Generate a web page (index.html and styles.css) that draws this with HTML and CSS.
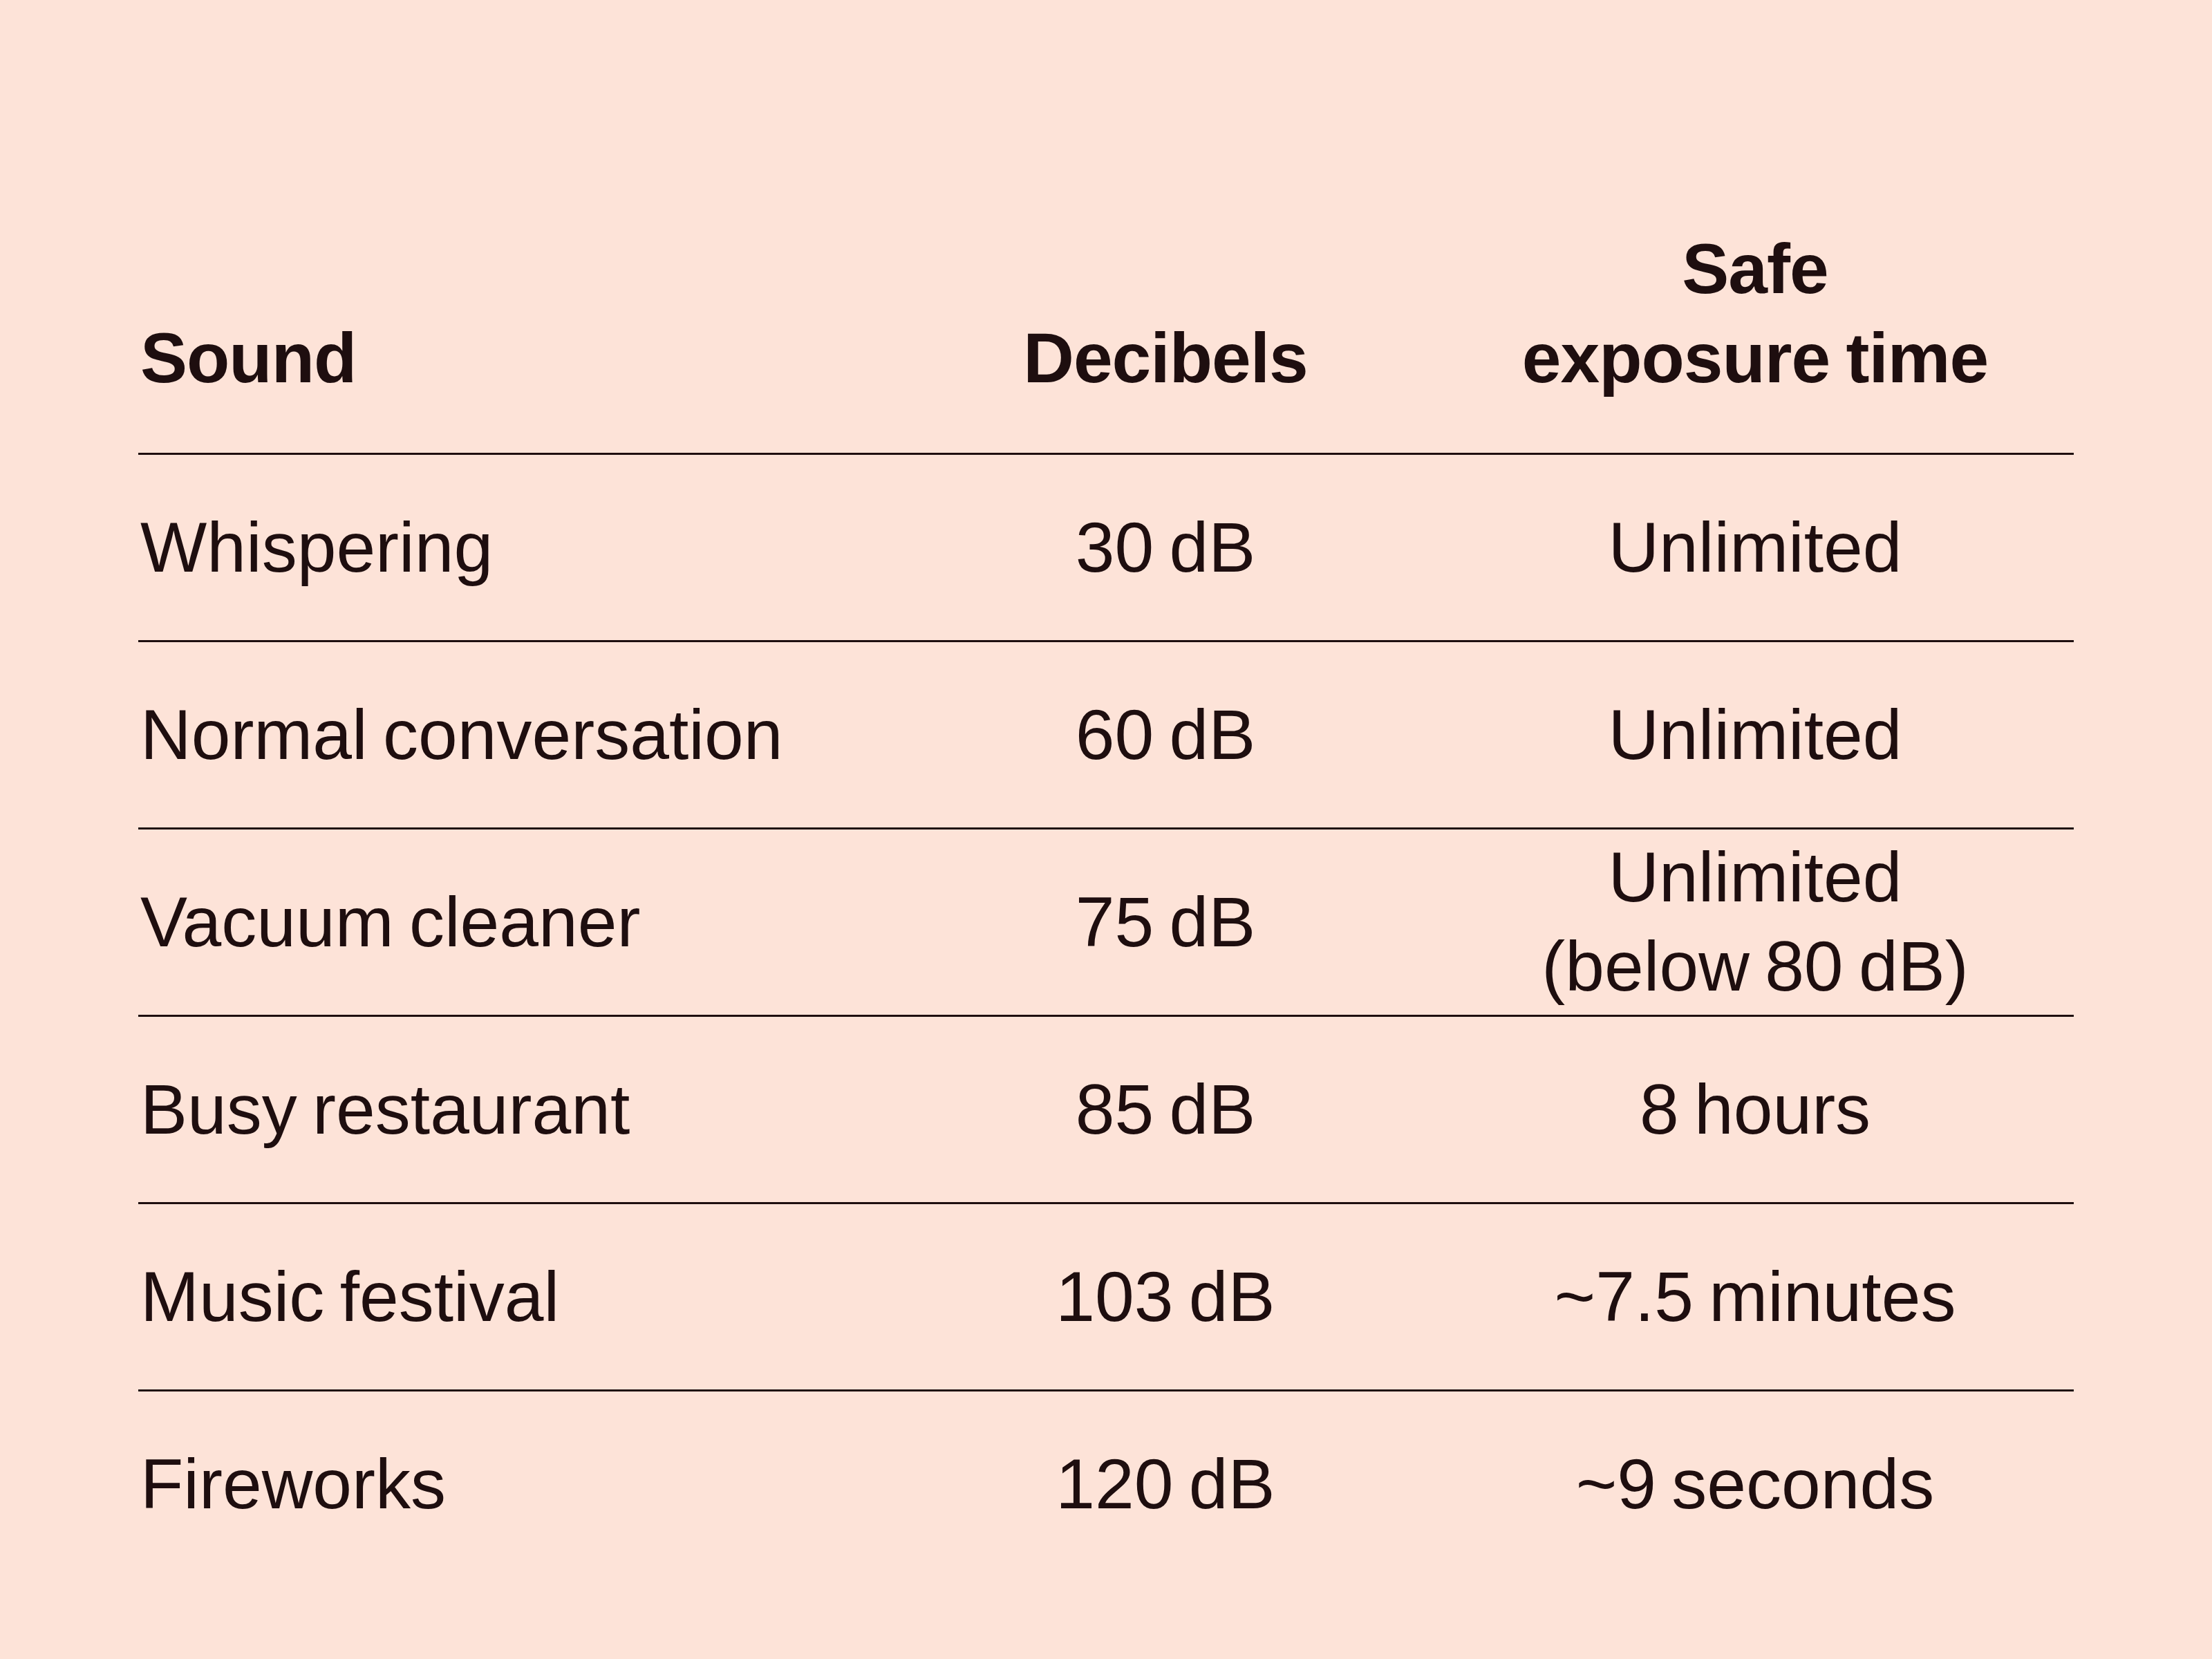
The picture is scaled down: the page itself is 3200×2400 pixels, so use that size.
FILE: index.html
```html
<!DOCTYPE html>
<html lang="en">
<head>
<meta charset="utf-8">
<title>Sound exposure table</title>
<link rel="stylesheet" href="styles.css">
</head>
<body>
<div class="page">
  <div class="table">
    <div class="row head">
      <div class="cell c1">Sound</div>
      <div class="cell c2">Decibels</div>
      <div class="cell c3">Safe<br>exposure time</div>
    </div>
    <div class="row">
      <div class="cell c1">Whispering</div>
      <div class="cell c2">30 dB</div>
      <div class="cell c3">Unlimited</div>
    </div>
    <div class="row">
      <div class="cell c1">Normal conversation</div>
      <div class="cell c2">60 dB</div>
      <div class="cell c3">Unlimited</div>
    </div>
    <div class="row">
      <div class="cell c1">Vacuum cleaner</div>
      <div class="cell c2">75 dB</div>
      <div class="cell c3">Unlimited<br>(below 80 dB)</div>
    </div>
    <div class="row">
      <div class="cell c1">Busy restaurant</div>
      <div class="cell c2">85 dB</div>
      <div class="cell c3">8 hours</div>
    </div>
    <div class="row">
      <div class="cell c1">Music festival</div>
      <div class="cell c2">103 dB</div>
      <div class="cell c3">~7.5 minutes</div>
    </div>
    <div class="row last">
      <div class="cell c1">Fireworks</div>
      <div class="cell c2">120 dB</div>
      <div class="cell c3">~9 seconds</div>
    </div>
  </div>
</div>
</body>
</html>
```

FILE: styles.css
```css
html, body {
  margin: 0;
  padding: 0;
  background: #fde3d8;
}

body {
  width: 3200px;
  height: 2400px;
  overflow: hidden;
  font-family: "Liberation Sans", Arial, sans-serif;
  color: #1e0e0f;
}

.page {
  padding: 325px 200px 0 200px;
}

.table {
  display: flex;
  flex-direction: column;
  width: 2800px;
}

.row {
  display: grid;
  grid-template-columns: 1094px 784px 922px;
  align-items: center;
  height: 268px;
  border-bottom: 3px solid #1e0e0f;
  font-size: 102px;
  line-height: 129px;
  font-weight: 400;
  word-spacing: -6px;
}

.row.last {
  border-bottom: none;
}

.row.head {
  height: auto;
  align-items: end;
  padding-bottom: 72px;
  font-weight: 700;
  letter-spacing: -1px;
  word-spacing: -4px;
}

.cell.c1 {
  text-align: left;
  padding-left: 3px;
}

.cell.c2,
.cell.c3 {
  text-align: center;
}
```
